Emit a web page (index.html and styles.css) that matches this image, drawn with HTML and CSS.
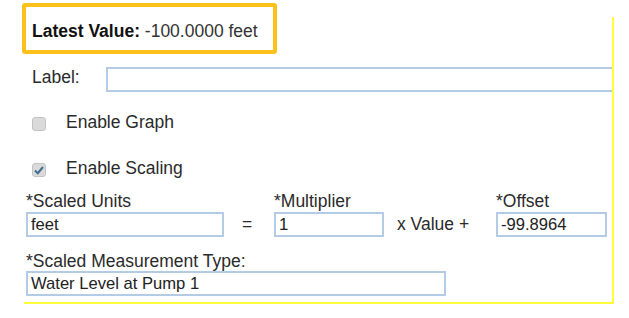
FILE: index.html
```html
<!DOCTYPE html>
<html>

<head>
    <meta content="width=device-width, initial-scale=1" name="viewport" />
    <link rel="stylesheet" href="styles.css">
</head>

<body>
    <div class="panel">
        <!-- highlighted reading -->
        <div class="latest"><b>Latest Value:</b> -100.0000 feet</div>

        <div class="labelRow">
            <span class="labelText">Label:</span>
            <div class="clip"><input class="textIn wideIn" type="text" value=""></div>
        </div>

        <div class="checkRow firstCheck">
            <span class="box"></span>
            <span>Enable Graph</span>
        </div>
        <div class="checkRow secondCheck">
            <span class="box">
                <svg width="12" height="12" viewBox="0 0 12 12">
                    <path d="M2 6.5 L4.8 9.2 L10 3" fill="none" stroke="#3f6d8e" stroke-width="2" />
                </svg>
            </span>
            <span>Enable Scaling</span>
        </div>

        <div class="scaleRow">
            <div class="field unitsField">
                <div class="cap">*Scaled Units</div>
                <input class="textIn" type="text" value="feet">
            </div>
            <span class="op eqOp">=</span>
            <div class="field multField">
                <div class="cap">*Multiplier</div>
                <input class="textIn" type="text" value="1">
            </div>
            <span class="op valOp">x Value +</span>
            <div class="field offField">
                <div class="cap">*Offset</div>
                <input class="textIn" type="text" value="-99.8964">
            </div>
        </div>

        <div class="field typeField">
            <div class="cap">*Scaled Measurement Type:</div>
            <input class="textIn" type="text" value="Water Level at Pump 1">
        </div>
    </div>
</body>

</html>
```

FILE: styles.css
```css
html,
body {
    margin: 0;
    background: #ffffff;
}

body {
    font-family: "Liberation Sans", Arial, sans-serif;
    font-size: 17.5px;
    line-height: 20px;
    color: #2a2a2a;
}

/* flow-root so the header's negative margin doesn't collapse through */
.panel {
    display: flow-root;
    margin: 17px 0 0 24px;
    width: 588px;
    height: 285px;
    border-right: 2px solid #ffff3c;
    border-bottom: 2px solid #ffff3c;
}

.latest {
    box-sizing: border-box;
    margin: -14px 0 0 -2px;
    width: 255px;
    height: 51px;
    padding: 14px 0 0 6px;
    border: 4px solid #fcc21b;
    border-radius: 3px;
    color: #333;
    white-space: nowrap;
}

.latest b {
    color: #111;
}

.labelRow {
    display: flex;
    align-items: flex-start;
    margin-top: 13px;
    padding-left: 8px;
}

.labelText {
    width: 74px;
}

/* input runs on under the yellow edge */
.clip {
    flex: 1;
    overflow: hidden;
}

.textIn {
    box-sizing: border-box;
    height: 25px;
    margin: 0;
    padding: 0 3px;
    border: 2px solid #b3cbe5;
    font-family: "Liberation Sans", Arial, sans-serif;
    font-size: 16.6px;
    color: #222;
    background: #fff;
    outline: none;
}

.wideIn {
    width: calc(100% + 12px);
}

.checkRow {
    display: flex;
    align-items: flex-start;
    padding-left: 8px;
}

.firstCheck {
    margin-top: 20px;
}

.secondCheck {
    margin-top: 26px;
}

.box {
    box-sizing: border-box;
    width: 14px;
    height: 14px;
    margin: 5px 20px 0 0;
    border: 1px solid #c3c3c3;
    border-radius: 3px;
    background: #dadada;
    display: flex;
    justify-content: center;
    align-items: center;
}

.scaleRow {
    display: flex;
    align-items: flex-end;
    margin-top: 13px;
    padding-left: 2px;
}

.field {
    display: flex;
    flex-direction: column;
}

.cap {
    margin-bottom: 1px;
}

.field .textIn {
    width: 100%;
}

.unitsField {
    width: 198px;
}

.multField {
    width: 110px;
}

.offField {
    width: 111px;
}

.op {
    box-sizing: border-box;
    height: 25px;
    line-height: 25px;
}

.eqOp {
    width: 50px;
    padding-left: 18px;
}

.valOp {
    width: 112px;
    padding-left: 13px;
}

.typeField {
    width: 420px;
    margin: 14px 0 0 2px;
}

.typeField .cap {
    margin-bottom: 0;
}
```
